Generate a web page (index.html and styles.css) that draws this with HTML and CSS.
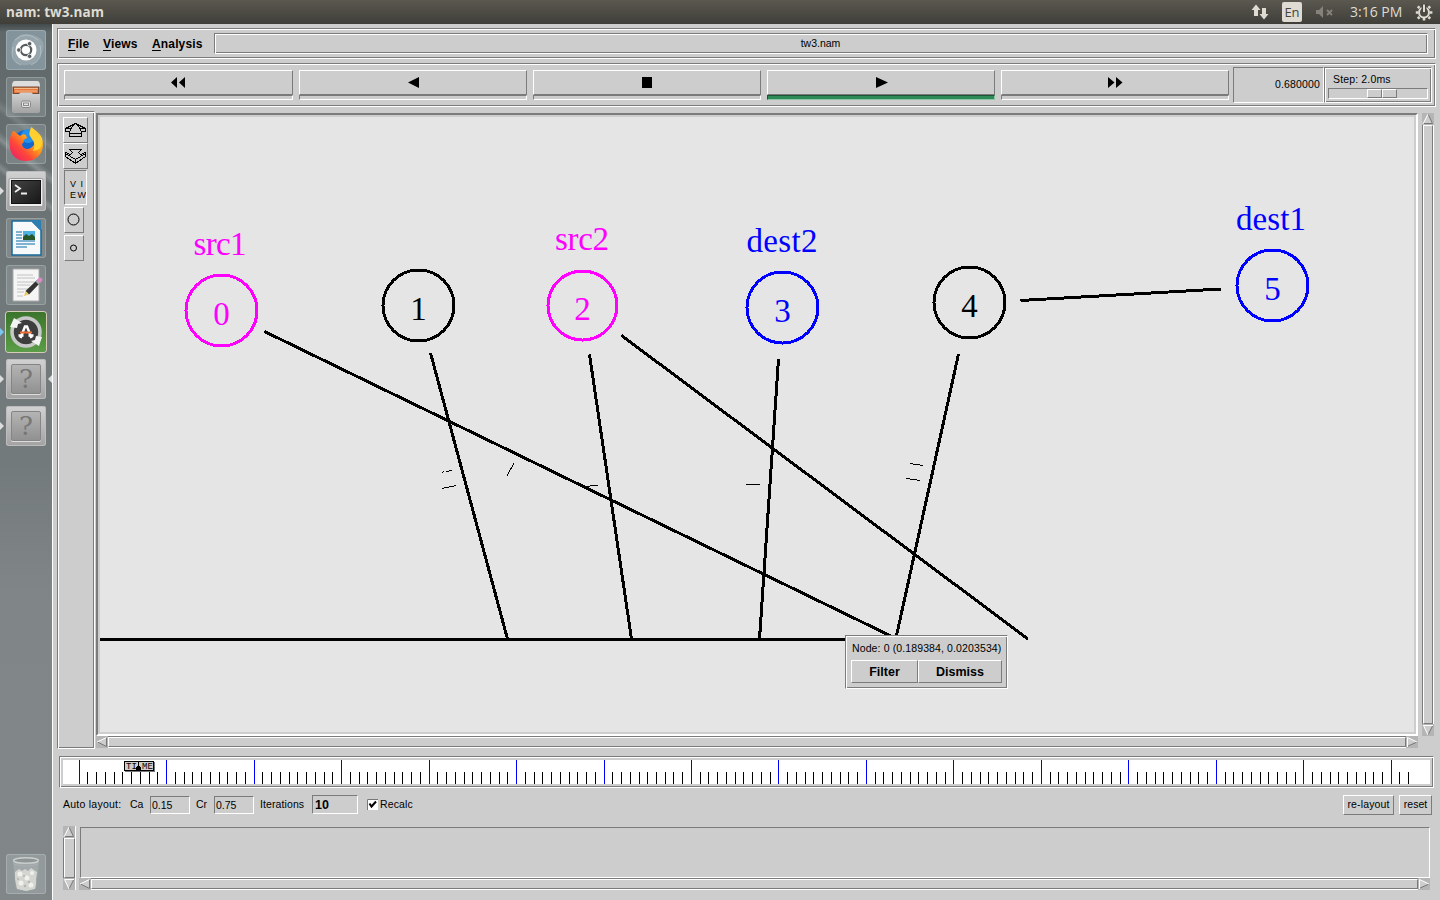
FILE: index.html
```html
<!DOCTYPE html>
<html lang="en">
<head>
<meta charset="utf-8">
<title>nam: tw3.nam</title>
<link rel="stylesheet" href="styles.css">
</head>
<body>
<header class="panel">
  <span class="panel-title">nam: tw3.nam</span>
  <div class="tray">
    <svg class="tray-net" width="20" height="18"><path d="M1.500 7L6 1.500 10.500 7H8v6H4V7zM9.500 11H12V5h4v6h2.500L14 16.500z" fill="#dfdbd2"/></svg>
    <span class="tray-lang">En</span>
    <svg class="tray-vol" width="20" height="14"><path d="M1 5h3l4-4v12l-4-4H1z" fill="#85827a"/><path d="M12 5l5 5M17 5l-5 5" stroke="#85827a" stroke-width="1.800"/></svg>
    <span class="tray-clock">3:16 PM</span>
    <svg class="tray-gear" width="18" height="18" viewBox="0 0 18 18"><g stroke="#dfdbd2" fill="none"><circle cx="9" cy="9.500" r="5" stroke-width="2"/><path d="M9 14V17.500M3 9.500H.8M15 9.500h2.400M4.500 5L2.800 3.300M13.500 5L15.200 3.300M4.500 14l-1.700 1.700M13.500 14l1.700 1.700" stroke-width="2.600"/><path d="M9 1v8" stroke="#484741" stroke-width="5"/><path d="M9 1.500V9" stroke-width="2"/></g></svg>
  </div>
</header>
<div class="desk">
  <nav class="launcher">
    <div class="tile dash"><svg viewBox="0 0 40 40"><path d="M6 14Q12 1 27 5T36 23Q30 37 17 35T6 14" fill="#a9b6bc" opacity=".5"/><path d="M9 10Q20 0 32 10M34 15Q38 30 25 35M7 17Q3 31 15 35" fill="none" stroke="#c3ced2" opacity=".6"/><circle cx="20" cy="20" r="10.500" fill="#fff"/><circle cx="20" cy="20" r="5.200" fill="none" stroke="#555b5e" stroke-width="2.200"/><g fill="#555b5e" stroke="#fff" stroke-width=".8"><circle cx="12.800" cy="20" r="2.200"/><circle cx="23.600" cy="13.700" r="2.200"/><circle cx="23.600" cy="26.300" r="2.200"/></g></svg></div>
    <div class="tile"><svg viewBox="0 0 40 40"><path d="M6 9Q6 4 9 4H31Q34 4 34 9V18H6z" fill="#ddd"/><path d="M6.500 9.500H33.500V17H6.500z" fill="#6b4b3b"/><path d="M8 10.500H32V16H8z" fill="#e8793a"/><path d="M8 11.500H32M9 14H31" stroke="#f3b98a"/><path d="M6 17H13L14.500 15.500H25.500L27 17H34V34Q34 36 32 36H8Q6 36 6 34z" fill="url(#steel)"/><rect x="15.500" y="24" width="9" height="6.500" rx="1.500" fill="#e4e4e4" stroke="#888"/><rect x="17.500" y="26" width="5" height="2.500" fill="none" stroke="#888"/></svg></div>
    <div class="tile"><svg viewBox="0 0 40 40"><circle cx="20" cy="19" r="13" fill="#1467cf"/><circle cx="22" cy="12" r="7" fill="#2391ea"/><path d="M5 11Q7 5 9 8L14 12Q17 9 20 11L21 14Q16 16 18 18Q14 20 18 24Q23 27 28 21Q31 14 26 5Q36 8 37 20C37 31 29 37 20 37S3 31 3.500 19Q4 13 5 11" fill="url(#fox)"/><path d="M25.500 3Q21 10 26 15Q30 20 27 27Q38 26 36 14Q34 10 32 11Q30 6 25.500 3" fill="#ffd02f"/></svg></div>
    <div class="tile light"><span class="run"></span><svg viewBox="0 0 40 40"><rect x="3" y="7.500" width="34" height="28" rx="1.500" fill="#eee" stroke="#999"/><rect x="5.500" y="9.500" width="29" height="23" fill="url(#night)" stroke="#111"/><path d="M9 14l5 3.500-5 3.500M15 22.500h6" fill="none" stroke="#eee" stroke-width="1.800"/></svg></div>
    <div class="tile"><svg viewBox="0 0 40 40"><path d="M6 3H26L35 12V37H6z" fill="#f6f8fa" stroke="#19689b" stroke-width="1.500"/><path d="M24 2H35V13z" fill="#2e7db0"/><path d="M10 14H16M10 17H16M10 20H16M10 23H29M10 26H29M10 29H21" stroke="#5a9cc4" stroke-width="1.500"/><path d="M17 13H29V22H17z" fill="#4fb0e4"/><path d="M17 19l3-3 3 2 3-2 3 3v3H17z" fill="#28572b"/></svg></div>
    <div class="tile"><svg viewBox="0 0 40 40"><path d="M7 4H33V36H7z" fill="#f5f5f5" stroke="#aaa"/><path d="M11 10H27M11 13H29M11 17H29M11 20H24M11 24H22M11 27H18M11 31H17" stroke="#c2c2c2"/><path d="M19.500 26L31 15l3 3L23 29.500z" fill="#333"/><path d="M18 31l1.500-5 3.500 3.500z" fill="#e8cd5f"/><path d="M29.500 16.500l2-2 3 3-2 2z" fill="#aaa"/><path d="M31.500 14.500l2.500-1.500 2 1-.3 2-1.700 1.500z" fill="#e18acb" stroke="#e18acb"/></svg></div>
    <div class="tile green"><span class="run blue"></span><svg viewBox="0 0 40 40"><circle cx="20" cy="20" r="12.500" fill="#3e3e3e"/><circle cx="20" cy="20" r="14" fill="none" stroke="#c8c8c8" stroke-width="3.500"/><path d="M4 15L8 6l8 5-4 1-1 4z" fill="#f4f4f4"/><path d="M36 25l-3 9-8-5 4-1 1-4z" fill="#f4f4f4"/><path d="M14.500 26L19 14.500h2l4.500 11.500M12.500 23.500h5M22.500 23.500h5" fill="none" stroke="#fff" stroke-width="2.500"/><path d="M14 20.500h12" stroke="#ec6b32" stroke-width="2"/></svg></div>
    <div class="tile light"><span class="run"></span><span class="focus"></span><b class="unknown">?</b></div>
    <div class="tile light"><span class="run"></span><b class="unknown">?</b></div>
    <div class="tile trash"><svg viewBox="0 0 40 40"><path d="M7 8L10 34Q20 39 30 34L33 8z" fill="#b8bdbd" opacity=".4"/><ellipse cx="20" cy="6.500" rx="12.500" ry="2.800" fill="#8e9595" stroke="#c9cdcd" stroke-width="1.500"/><path d="M8 10Q20 14 32 10" fill="none" stroke="#a9afaf"/><path d="M9 18l4-3 3 2 3-2 3 2 3-3 3 2 3 2-1 7v5l-1 5-9 2-9-2-1-5-1-5z" fill="#d3d5d0"/><g fill="#f0f0ed"><circle cx="14" cy="20" r="2.500"/><circle cx="21" cy="24" r="2.500"/><circle cx="26" cy="19" r="2"/><circle cx="15" cy="29" r="2.500"/><circle cx="25" cy="31" r="2.500"/></g><g fill="#b3b6b1"><circle cx="18" cy="22" r="1"/><circle cx="23" cy="28" r="1.200"/><circle cx="12" cy="25" r="1"/><circle cx="19" cy="32" r="1.200"/></g></svg></div>
    <svg class="defs" width="0" height="0"><defs><linearGradient id="steel" x2="0" y2="1"><stop stop-color="#d2d2d2"/><stop offset="1" stop-color="#a2a2a2"/></linearGradient><linearGradient id="night" x2="1" y2="1"><stop stop-color="#444"/><stop offset="1" stop-color="#171717"/></linearGradient><linearGradient id="fox" x1="1" y1="0" x2="0" y2="1"><stop stop-color="#ffda34"/><stop offset=".4" stop-color="#ff9b18"/><stop offset=".65" stop-color="#ff463b"/><stop offset="1" stop-color="#e31672"/></linearGradient></defs></svg>
  </nav>
  <main class="app">
    <div class="menubar groove">
      <span class="menu m-file"><u>F</u>ile</span><span class="menu m-views"><u>V</u>iews</span><span class="menu m-analysis"><u>A</u>nalysis</span>
      <div class="trace-name groove"><span>tw3.nam</span></div>
    </div>
    <div class="controls groove">
      <div class="play-row">
        <div class="play"><button class="raised"><svg width="15" height="11"><path d="M6 0V11L0 5.500zM14 0V11L8 5.500z"/></svg></button><i></i></div>
        <div class="play"><button class="raised"><svg width="15" height="11"><path d="M13 0V11L2 5.500z"/></svg></button><i></i></div>
        <div class="play"><button class="raised"><svg width="15" height="11"><path d="M2 0H12V11H2z"/></svg></button><i></i></div>
        <div class="play on"><button class="raised"><svg width="15" height="11"><path d="M2 0V11L14 5.500z"/></svg></button><i></i></div>
        <div class="play"><button class="raised"><svg width="15" height="11"><path d="M0 0V11L6.500 5.500zM8 0V11L14.500 5.500z"/></svg></button><i></i></div>
      </div>
      <div class="clock sunken"><span>0.680000</span></div>
      <div class="step groove"><span>Step: 2.0ms</span><div class="trough sunken"><div class="thumb"><i class="raised"></i><i class="raised"></i></div></div></div>
    </div>
    <div class="stage">
      <aside class="tools groove">
        <button class="raised t-zoom"><svg width="23" height="24"><path d="M11.500 5.500L6.500 10.500H1.500V13.500H5.500L7.500 10.500M11.500 5.500L16.500 10.500H21.500V13.500H17.500L15.500 10.500M11.500 5.500L1.500 10.500M11.500 5.500L21.500 10.500M5.500 14V18.500H17.500V14M5.500 15.500H17.500"/></svg></button>
        <button class="raised t-zoom"><svg width="23" height="24"><path d="M5.500 5.500H17.500M5.500 5.500L8.500 8.500L6.500 10.500L1.500 8.500V12.500L11.500 19.500L21.500 12.500V8.500L16.500 10.500L14.500 8.500L17.500 5.500M1.500 9.500L11.500 15.500L21.500 9.500M11.500 15.500V19.500"/></svg></button>
        <button class="sunken t-view"><svg width="21" height="33"><text x="5" y="16" textLength="13">V I</text><text x="5" y="27" textLength="16">E W</text></svg></button>
        <button class="raised t-size"><svg width="18" height="24"><circle cx="8.500" cy="11.500" r="5.500"/></svg></button>
        <button class="raised t-size"><svg width="18" height="24"><circle cx="8.500" cy="12" r="3"/></svg></button>
      </aside>
      <div class="view">
        <div class="canvas">
          <svg class="net" width="1314" height="615" viewBox="100 117 1314 615">
            <g class="links"><path d="M100 639H900M264.500 331.500L897 639M430.500 353L507.500 639M589.500 354.500L631.500 639M621.500 335.500L1028 639M778.500 359L759.500 639M958.500 354L896 638M1020.500 300.500L1221 289"/></g>
            <g class="packets"><path d="M442 472.500L444 471.500M446 471.500L452 470.500M442 488.500L456 485.500M507 475.500L514 463.500M583 486.500L598 485.500M746 484.500H760M910 463.500L923 465.500M906 478.500L920 480.500"/></g>
            <g class="node src"><circle cx="221.500" cy="310.500" r="35.500"/><text x="221.500" y="324.500">0</text><text x="220" y="255" textLength="53">src1</text></g>
            <g class="node hop"><circle cx="418.500" cy="305.500" r="35.500"/><text x="418.500" y="320">1</text></g>
            <g class="node src"><circle cx="582.500" cy="305.500" r="34.500"/><text x="582.500" y="320">2</text><text x="582" y="250" textLength="54">src2</text></g>
            <g class="node dst"><circle cx="782.500" cy="307.500" r="35.500"/><text x="782.500" y="322">3</text><text x="782" y="252" textLength="71">dest2</text></g>
            <g class="node hop"><circle cx="969.500" cy="302.500" r="35.500"/><text x="969.500" y="317">4</text></g>
            <g class="node dst"><circle cx="1272.500" cy="285.500" r="35.500"/><text x="1272.500" y="300">5</text><text x="1271" y="230" textLength="70">dest1</text></g>
          </svg>
          <div class="popup groove"><span class="popup-text">Node: 0 (0.189384, 0.0203534)</span><div class="popup-row"><button class="raised b-filter"><span>Filter</span></button><button class="raised b-dismiss"><span>Dismiss</span></button></div></div>
        </div>
        <div class="hbar"><svg width="12" height="12"><use href="#al"/></svg><i class="raised"></i><svg width="12" height="12"><use href="#ar"/></svg></div>
      </div>
      <div class="vbar"><svg width="12" height="12"><use href="#au"/></svg><i class="raised"></i><svg width="12" height="12"><use href="#ad"/></svg></div>
    </div>
    <div class="timeline groove"><svg id="ruler" width="1367" height="24" viewBox="63 760 1367 24"></svg></div>
    <div class="layout-row">
      <span class="l-auto">Auto layout:</span><span class="l-ca">Ca</span><span class="field">0.15</span><span class="l-cr">Cr</span><span class="field">0.75</span><span class="l-it">Iterations</span><span class="field big">10</span>
      <svg class="check" width="11" height="11"><path d="M0 0H11V11H0z" fill="#fff"/><path d="M.5 11V.5H11" fill="none" stroke="#777"/><path d="M2.500 4.500L4.500 7.500L9 2.500" fill="none" stroke="#000" stroke-width="2"/></svg><span class="l-recalc">Recalc</span>
      <button class="raised b-relayout"><span>re-layout</span></button><button class="raised b-reset"><span>reset</span></button>
    </div>
    <div class="notes">
      <div class="vbar"><svg width="12" height="12"><use href="#au"/></svg><i class="raised"></i><svg width="12" height="12"><use href="#ad"/></svg></div>
      <div class="notes-main"><div class="pane sunken"></div><div class="hbar"><svg width="12" height="12"><use href="#al"/></svg><i class="raised"></i><svg width="12" height="12"><use href="#ar"/></svg></div></div>
    </div>
    <svg class="defs" width="0" height="0"><defs>
      <g id="al"><path d="M0 0H12V12H0z" fill="#b5b5b5"/><path d="M11 1V11L1 6z" fill="#cdcdcd"/><path d="M10.500 1V10.500L1.500 6" fill="none" stroke="#777"/><path d="M10.500 1.500L1 6" stroke="#fff"/></g>
      <g id="ar"><path d="M0 0H12V12H0z" fill="#b5b5b5"/><path d="M1 1V11L11 6z" fill="#cdcdcd"/><path d="M1 10.500L11 6" stroke="#777"/><path d="M1.500 11V1.500L11 6" fill="none" stroke="#fff"/></g>
      <g id="au"><path d="M0 0H12V12H0z" fill="#b5b5b5"/><path d="M6 1L11 11H1z" fill="#cdcdcd"/><path d="M6 1L10.500 10.500H1" fill="none" stroke="#777"/><path d="M6 1L1 11" stroke="#fff"/></g>
      <g id="ad"><path d="M0 0H12V12H0z" fill="#b5b5b5"/><path d="M1 1H11L6 11z" fill="#cdcdcd"/><path d="M11 1L6 11" stroke="#777"/><path d="M11 1.500H1.500L6 11" fill="none" stroke="#fff"/></g>
    </defs></svg>
  </main>
</div>
<script src="ruler.js"></script>
</body>
</html>
```

FILE: styles.css
```css
* { box-sizing: border-box; }
body { margin: 0; width: 1440px; height: 900px; overflow: hidden; background: #cdcdcd; color: #000; font: 11px/13px "Liberation Sans", Arial, sans-serif; display: flex; flex-direction: column; }
button { font: inherit; color: inherit; padding: 0; margin: 0; background: #cdcdcd; border-radius: 0; display: flex; align-items: center; justify-content: center; }
svg { display: block; flex: none; }
span { white-space: nowrap; }
.defs { position: absolute; }
.groove { border: 1px solid; border-color: #7b7b7b #fff #fff #7b7b7b; box-shadow: inset 1px 1px #fff, inset -1px -1px #7b7b7b; background: #cdcdcd; }
.raised { border: 1px solid; border-color: #fff #7b7b7b #7b7b7b #fff; background: #cdcdcd; }
.sunken { border: 1px solid; border-color: #7b7b7b #fff #fff #7b7b7b; background: #cdcdcd; }

.panel { height: 24px; flex: none; display: flex; justify-content: space-between; background: linear-gradient(#5a584f, #3f3e39); color: #dfdbd2; font-family: "Open Sans", sans-serif; }
.panel-title { padding-left: 6px; font-size: 13.500px; line-height: 24px; font-weight: 700; letter-spacing: .1px; }
.tray { display: flex; align-items: center; padding-right: 7px; }
.tray-net { margin-right: 12px; }
.tray-lang { width: 20px; height: 20px; border-radius: 2px; background: #dfdbd2; color: #45443e; font-size: 13px; line-height: 20px; text-align: center; }
.tray-vol { margin: 0 15px 0 13px; }
.tray-clock { width: 53px; font-size: 14px; line-height: 24px; margin-right: 12px; }

.desk { display: flex; flex: 1; }
.launcher { width: 53px; border-right: 1px solid #fff; padding: 6px 0 6px 6px; background: linear-gradient(rgba(50,55,57,.6), transparent 8px), linear-gradient(38deg, transparent 30%, rgba(190,198,200,.3) 33%, transparent 36%, transparent 44%, rgba(190,198,200,.35) 47%, transparent 51%, transparent 60%, rgba(190,198,200,.2) 63%, transparent 67%) 0 50px/53px 160px no-repeat, linear-gradient(#5f6769, #71787a 30%, #737a7c 50%, #808687 65%, #818788); display: flex; flex-direction: column; gap: 7px; }
.tile { position: relative; width: 40px; height: 40px; flex: none; border-radius: 3px; background: rgba(180,190,192,.25); box-shadow: inset 0 0 0 1px rgba(210,218,220,.3); display: flex; align-items: center; justify-content: center; }
.tile svg { width: 40px; height: 40px; }
.tile.dash { background: #83949c; }
.tile.light { background: linear-gradient(#d2d2d2, #a2a2a2); box-shadow: inset 0 0 0 1px #bcbcbc; }
.tile.green { background: linear-gradient(#3b752c, #5b9d48); box-shadow: 0 0 0 1px #d5cdb5; }
.tile.trash { margin-top: auto; background: rgba(190,200,202,.3); }
.unknown { width: 30px; height: 30px; border: 1px solid #858585; border-radius: 2px; background: linear-gradient(#b4b4b4, #919191); box-shadow: 0 1px #ddd; font: 26px/29px "DejaVu Serif", serif; color: #777; text-align: center; }
.run, .focus { position: absolute; top: 16px; border: 4px solid transparent; width: 0; height: 0; }
.run { left: -6px; border-left-color: #ddd; border-right: 0; }
.run.blue { border-left-color: #79c7ee; }
.focus { right: -6px; border-right-color: #ddd; border-left: 0; }

.app { flex: 1; padding: 4px 4px 0; display: flex; flex-direction: column; }
.menubar { height: 31px; display: flex; align-items: center; padding: 0 7px 0 10px; font-size: 12px; font-weight: 700; }
.menu { padding-top: 1px; letter-spacing: .15px; }
.menu u { text-underline-offset: 2px; }
.m-file { width: 35px; }
.m-views { width: 49px; }
.m-analysis { width: 62px; }
.trace-name { flex: 1; height: 21px; display: flex; align-items: center; justify-content: center; padding-right: 1px; font-size: 10.500px; font-weight: 400; }

.controls { margin-top: 4px; height: 44px; padding: 3px 3px 3px 6px; display: flex; }
.play-row { width: 1165px; height: 30px; margin-top: 3px; display: grid; grid-template-columns: 229px repeat(4, 228px); column-gap: 6px; }
.play button { width: 100%; height: 25px; box-shadow: 0 1px #7b7b7b; }
.play i { display: block; height: 5px; border: 1px solid; border-color: #7b7b7b #fff #fff #7b7b7b; }
.play.on i { background: #2e8b57; border-color: #1c5435 #8fc5a5 #8fc5a5 #1c5435; }
.clock { width: 91px; margin-left: 4px; display: flex; align-items: center; justify-content: flex-end; padding: 0 3px 1px 0; font-size: 10.500px; letter-spacing: .15px; }
.step { flex: 1; padding: 5px 3px 0; }
.step span { display: block; padding-left: 5px; font-size: 10.500px; letter-spacing: .15px; }
.trough { height: 11px; margin-top: 2px; }
.thumb { width: 30px; height: 9px; margin-left: 38px; display: flex; }
.thumb i { flex: 1; }

.stage { margin-top: 4px; height: 638px; display: flex; }
.tools { width: 38px; padding: 5px 0 0 5px; display: flex; flex-direction: column; align-items: flex-start; }
.tools svg { fill: none; stroke: #000; }
.t-zoom { width: 25px; height: 26px; }
.t-zoom svg { shape-rendering: crispEdges; }
.t-view { width: 23px; height: 35px; margin-left: 1px; margin-top: 1px; }
.tools .t-view text { fill: #000; stroke: none; font: 9px "Liberation Sans", sans-serif; }
.t-size { width: 20px; height: 26px; margin: 2px 0 0 1px; }
.view { margin: 2px 0 0 1px; width: 1322px; }
.canvas { position: relative; height: 623px; border: 2px solid; border-color: #7b7b7b #fff #fff #7b7b7b; padding: 2px; background: #cdcdcd; }
.net { background: #e5e5e5; }
.links { stroke: #000; stroke-width: 3; fill: none; shape-rendering: crispEdges; }
.packets { stroke: #000; stroke-width: 1; fill: none; shape-rendering: crispEdges; }
.node circle { fill: none; stroke: currentColor; stroke-width: 3; shape-rendering: crispEdges; }
.node text { fill: currentColor; font: 33px "Liberation Serif", "Times New Roman", serif; text-anchor: middle; }
.src { color: #f0f; }
.hop { color: #000; }
.dst { color: #00f; }
.popup { position: absolute; left: 747px; top: 520px; width: 163px; height: 54px; padding: 6px 5px 0; }
.popup-text { display: block; padding-left: 1px; font-size: 10.500px; letter-spacing: .12px; height: 18px; }
.popup-row { display: flex; font-size: 12.500px; font-weight: 700; }
.popup-row span { padding-top: 1px; }
.b-filter { width: 67px; height: 23px; }
.b-dismiss { width: 84px; height: 23px; }
.hbar { height: 12px; display: flex; border-top: 1px solid #7b7b7b; border-bottom: 1px solid #fff; }
.hbar i { flex: 1; }
.hbar svg { margin-top: -1px; }
.vbar { width: 12px; display: flex; flex-direction: column; border-left: 1px solid #7b7b7b; border-right: 1px solid #fff; }
.vbar svg { margin-left: -1px; }
.vbar i { flex: 1; }
.stage .vbar { margin: 2px 0 0 4px; height: 623px; }

.timeline { margin: 7px 2px 0; width: 1375px; height: 32px; padding: 3px; }
#ruler { background: #fff; shape-rendering: crispEdges; }
.layout-row { display: flex; align-items: center; height: 21px; margin: 6px 0 0 6px; font-size: 10.500px; }
.l-auto { width: 67px; letter-spacing: .25px; }
.l-ca { width: 20px; }
.l-cr { width: 17px; margin-left: 6px; }
.l-it { width: 52px; margin-left: 6px; letter-spacing: .1px; }
.field { width: 40px; height: 18px; border: 1px solid; border-color: #7b7b7b #fff #fff #7b7b7b; padding: 2px 1px; }
.field + .l-cr { margin-left: 6px; }
.l-cr + .field { margin-left: 1px; }
.field.big { width: 46px; height: 19px; font-size: 12.500px; font-weight: 700; padding: 3px 2px; }
.check { margin: 0 2px 0 9px; }
.l-recalc { letter-spacing: .15px; }
.b-relayout { width: 51px; height: 20px; margin-left: auto; }
.b-relayout span { letter-spacing: .15px; }
.b-reset { width: 33px; height: 20px; margin: 0 4px 0 5px; }
.notes { display: flex; margin: 11px 0 0 6px; height: 64px; }
.notes .vbar { width: 13px; }
.notes-main { width: 1351px; margin-left: 3px; padding-top: 1px; }
.pane { height: 51px; margin-left: 1px; }
```

FILE: ruler.js
```js
const ruler = document.getElementById('ruler');
const ns = 'http://www.w3.org/2000/svg';
function bar(x, y, w, h, fill) {
  const r = document.createElementNS(ns, 'rect');
  r.setAttribute('x', x); r.setAttribute('y', y);
  r.setAttribute('width', w); r.setAttribute('height', h);
  r.setAttribute('fill', fill);
  ruler.appendChild(r);
}
for (let i = 0; i <= 152; i++) {
  const major = i % 10 === 0;
  bar(Math.floor(79.2 + 8.747 * i), major ? 760 : 772, 1, major ? 24 : 12, major ? '#00f' : '#000');
}
bar(125, 762, 30, 10, '#777');
bar(124, 761, 30, 10, '#000');
bar(125, 762, 28, 8, '#cdcdcd');
function label(x, s) {
  const t = document.createElementNS(ns, 'text');
  t.setAttribute('x', x); t.setAttribute('y', 769.2);
  t.setAttribute('font-size', '9');
  t.setAttribute('font-family', 'Liberation Mono, monospace');
  t.textContent = s;
  ruler.appendChild(t);
}
label(126, 'TI');
label(142, 'ME');
const needle = document.createElementNS(ns, 'path');
needle.setAttribute('d', 'M138 761h1v4l2 3v3h-5v-3l2-3z');
ruler.appendChild(needle);
```
